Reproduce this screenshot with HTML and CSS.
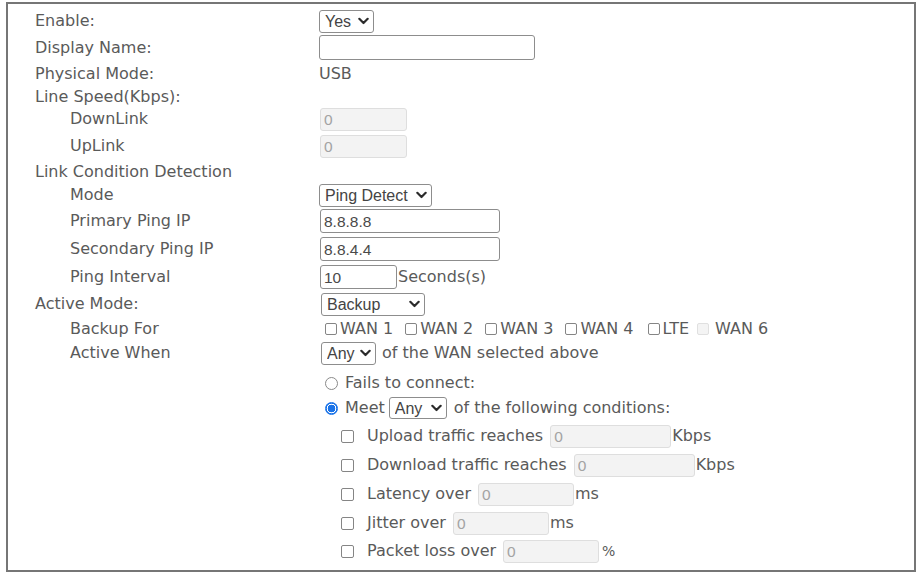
FILE: index.html
```html
<!DOCTYPE html>
<html lang="en">
<head>
<meta charset="utf-8">
<title>WAN Settings</title>
<link rel="stylesheet" href="styles.css">
</head>
<body>
<div class="frame">
  <div class="row first">
    <div class="lbl">Enable:</div>
    <div class="val">
      <span class="sel w-yes"><select><option>Yes</option><option>No</option></select><svg class="chev" viewBox="0 0 10 7"><path d="M1.2 1.5 L5 5.3 L8.8 1.5"/></svg></span>
    </div>
  </div>
  <div class="row mt2">
    <div class="lbl">Display Name:</div>
    <div class="val"><input class="txt w-name tall" type="text" value=""></div>
  </div>
  <div class="row text">
    <div class="lbl">Physical Mode:</div>
    <div class="val">USB</div>
  </div>
  <div class="row text mt2">
    <div class="lbl">Line Speed(Kbps):</div>
    <div class="val"></div>
  </div>
  <div class="row mt0">
    <div class="lbl sub">DownLink</div>
    <div class="val"><input class="txt dis w-speed" type="text" value="0" disabled></div>
  </div>
  <div class="row mt3">
    <div class="lbl sub">UpLink</div>
    <div class="val"><input class="txt dis w-speed" type="text" value="0" disabled></div>
  </div>
  <div class="row text mt3">
    <div class="lbl">Link Condition Detection</div>
    <div class="val"></div>
  </div>
  <div class="row mt1">
    <div class="lbl sub">Mode</div>
    <div class="val">
      <span class="sel w-ping"><select><option>Ping Detect</option></select><svg class="chev" viewBox="0 0 10 7"><path d="M1.2 1.5 L5 5.3 L8.8 1.5"/></svg></span>
    </div>
  </div>
  <div class="row mt2">
    <div class="lbl sub">Primary Ping IP</div>
    <div class="val"><input class="txt w-ip" type="text" value="8.8.8.8"></div>
  </div>
  <div class="row">
    <div class="lbl sub">Secondary Ping IP</div>
    <div class="val"><input class="txt w-ip" type="text" value="8.8.4.4"></div>
  </div>
  <div class="row">
    <div class="lbl sub">Ping Interval</div>
    <div class="val line g1"><input class="txt w-int" type="text" value="10"><span>Seconds(s)</span></div>
  </div>
  <div class="row mt3">
    <div class="lbl">Active Mode:</div>
    <div class="val">
      <span class="sel w-backup"><select><option>Backup</option></select><svg class="chev" viewBox="0 0 10 7"><path d="M1.2 1.5 L5 5.3 L8.8 1.5"/></svg></span>
    </div>
  </div>
  <div class="row mt1">
    <div class="lbl sub">Backup For</div>
    <div class="val line wans">
      <label class="wan"><input class="cb" type="checkbox">WAN 1</label>
      <label class="wan"><input class="cb" type="checkbox">WAN 2</label>
      <label class="wan"><input class="cb" type="checkbox">WAN 3</label>
      <label class="wan"><input class="cb" type="checkbox">WAN 4</label>
      <label class="wan"><input class="cb" type="checkbox">LTE</label>
      <label class="wan"><input class="cb" type="checkbox" disabled>WAN 6</label>
    </div>
  </div>
  <div class="row mt0">
    <div class="lbl sub">Active When</div>
    <div class="val line g6">
      <span class="sel w-any"><select><option>Any</option></select><svg class="chev" viewBox="0 0 10 7"><path d="M1.2 1.5 L5 5.3 L8.8 1.5"/></svg></span>
      <span>of the WAN selected above</span>
    </div>
  </div>
  <div class="row mt6">
    <div class="lbl"></div>
    <div class="val line opt"><input class="rd" type="radio" name="when"><span>Fails to connect:</span></div>
  </div>
  <div class="row mt1">
    <div class="lbl"></div>
    <div class="val line opt">
      <input class="rd" type="radio" name="when" checked>
      <span>Meet</span>
      <span class="sel w-any2"><select><option>Any</option></select><svg class="chev" viewBox="0 0 10 7"><path d="M1.2 1.5 L5 5.3 L8.8 1.5"/></svg></span>
      <span>of the following conditions:</span>
    </div>
  </div>
  <div class="row">
    <div class="lbl"></div>
    <div class="val line cond"><input class="cb" type="checkbox"><span class="cname">Upload traffic reaches</span><input class="txt dis w-kbps" type="text" value="0"><span>Kbps</span></div>
  </div>
  <div class="row mt5">
    <div class="lbl"></div>
    <div class="val line cond"><input class="cb" type="checkbox"><span class="cname">Download traffic reaches</span><input class="txt dis w-kbps" type="text" value="0"><span>Kbps</span></div>
  </div>
  <div class="row mt5">
    <div class="lbl"></div>
    <div class="val line cond"><input class="cb" type="checkbox"><span class="cname">Latency over</span><input class="txt dis w-ms" type="text" value="0"><span>ms</span></div>
  </div>
  <div class="row mt5">
    <div class="lbl"></div>
    <div class="val line cond"><input class="cb" type="checkbox"><span class="cname">Jitter over</span><input class="txt dis w-ms" type="text" value="0"><span>ms</span></div>
  </div>
  <div class="row">
    <div class="lbl"></div>
    <div class="val line cond"><input class="cb" type="checkbox"><span class="cname">Packet loss over</span><input class="txt dis w-ms" type="text" value="0"><span class="pct">%</span></div>
  </div>
</div>
</body>
</html>
```

FILE: styles.css
```css
* { box-sizing: border-box; }

html, body {
  margin: 0;
  padding: 0;
  background: #ffffff;
}

body {
  font-family: "DejaVu Sans", Verdana, sans-serif;
  font-size: 16px;
  color: #5a5a5a;
}

.frame {
  margin: 2px 4px 0 6px;
  height: 570px;
  border: 2px solid #767676;
  padding: 5px 0 0 27px;
  background: #ffffff;
}

.row {
  display: grid;
  grid-template-columns: 284px auto;
  align-items: center;
  height: 24px;
  margin-top: 4px;
}
.row.text { height: 21px; }
.row.first { margin-top: 0; }
.row.mt0 { margin-top: 0; }
.row.mt1 { margin-top: 1px; }
.row.mt2 { margin-top: 2px; }
.row.mt3 { margin-top: 3px; }
.row.mt5 { margin-top: 5px; }
.row.mt6 { margin-top: 6px; }

.lbl {
  white-space: nowrap;
  line-height: 20px;
}
.lbl.sub { padding-left: 35px; }

.val {
  white-space: nowrap;
  line-height: 20px;
}
.line {
  display: flex;
  align-items: center;
}
.g1 { gap: 1px; }
.g6 { gap: 6px; }

/* text inputs */
.txt {
  font-family: "Liberation Sans", Arial, sans-serif;
  font-size: 15.5px;
  color: #4a4a4a;
  height: 24px;
  margin: 0;
  padding: 1px 3px 0;
  border: 1px solid #8d8d8d;
  border-radius: 3px;
  background: #ffffff;
  outline: none;
}
.txt.tall { height: 25px; }
.txt.dis {
  background: #f3f3f3;
  border-color: #dedede;
  color: #a3a3a3;
  height: 23px;
}
.w-name { width: 216px; }
.w-speed { width: 87px; margin-left: 1px; }
.w-ip { width: 180px; margin-left: 1px; }
.w-int { width: 77px; margin-left: 1px; }
.w-kbps { width: 121px; }
.w-ms { width: 96px; }

/* select wrapper */
.sel {
  display: inline-flex;
  align-items: center;
  height: 23px;
  border: 1px solid #8d8d8d;
  border-radius: 3px;
  background: #ffffff;
  padding-right: 4px;
  vertical-align: middle;
}
.sel select {
  appearance: none;
  -webkit-appearance: none;
  border: 0;
  background: transparent;
  flex: 1;
  min-width: 0;
  height: 100%;
  margin: 0;
  padding: 0 0 0 5px;
  font-family: "Liberation Sans", Arial, sans-serif;
  font-size: 16px;
  color: #444444;
  outline: none;
}
.chev {
  width: 11px;
  height: 8px;
  flex: none;
}
.chev path {
  fill: none;
  stroke: #2b2b2b;
  stroke-width: 2;
  stroke-linecap: round;
  stroke-linejoin: round;
}
.w-yes { width: 55px; }
.w-ping { width: 113px; }
.w-backup { width: 104px; margin-left: 2px; }
.w-any { width: 55px; margin-left: 2px; }
.w-any2 { width: 58px; height: 22px; margin-left: 4px; }

/* checkboxes */
.cb {
  appearance: none;
  -webkit-appearance: none;
  width: 12px;
  height: 12px;
  margin: 0;
  border: 1px solid #858585;
  border-radius: 2px;
  background: #ffffff;
  flex: none;
}
.cb:disabled {
  border-color: #e0e0e0;
  background: #f4f4f4;
}

.wans { padding-left: 6px; gap: 12px; }
.wan {
  display: inline-flex;
  align-items: center;
  gap: 3px;
}
.wan:nth-child(5) { margin-left: 2px; }
.wan:nth-child(6) { margin-left: -4px; gap: 6px; }

/* radios */
.rd {
  appearance: none;
  -webkit-appearance: none;
  width: 13px;
  height: 13px;
  margin: 0;
  border: 1px solid #8a8a8a;
  border-radius: 50%;
  background: #ffffff;
  flex: none;
}
.rd:checked {
  border-color: #1a73e8;
  background: radial-gradient(circle, #1a73e8 0 3.6px, #ffffff 4.1px 4.6px, #1a73e8 5.1px);
}
.opt { padding-left: 6px; gap: 7px; }
.opt .sel { margin-left: -3px; }

/* conditions */
.cond { padding-left: 22px; }
.cond .cb { width: 13px; height: 13px; margin-right: 13px; }
.cond .cname { margin-right: 7px; }
.cond .txt { margin-right: 1px; }
.pct { margin-left: 2px; font-size: 14px; }
```
